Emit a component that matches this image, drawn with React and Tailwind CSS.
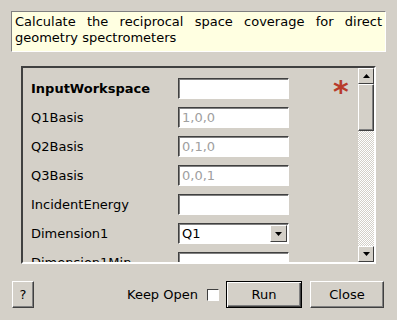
import React from "react";

const rows = [
  { label: "InputWorkspace", bold: true, value: "", star: true },
  { label: "Q1Basis", value: "1,0,0", placeholder: true },
  { label: "Q2Basis", value: "0,1,0", placeholder: true },
  { label: "Q3Basis", value: "0,0,1", placeholder: true },
  { label: "IncidentEnergy", value: "" },
  { label: "Dimension1", combo: true, value: "Q1" },
  { label: "Dimension1Min", value: "" },
];

const Arrow = ({ down }) => (
  <svg width="7" height="4" viewBox="0 0 7 4">
    <path d={down ? "M0 0h7L3.5 4z" : "M0 4h7L3.5 0z"} fill="#000" />
  </svg>
);

const Field = ({ row }) => {
  if (row.combo) {
    return (
      <div className="flex h-[21px] w-[111px] items-center border-t border-l border-t-[#404040] border-l-[#404040] border-b border-r border-b-white border-r-white bg-white shadow-[inset_1px_1px_0_#808080]">
        <span className="flex-1 pl-[3px] text-[13px] text-black">{row.value}</span>
        <div className="mr-[1px] flex h-[17px] w-[17px] items-center justify-center border border-t-white border-l-white border-b-[#404040] border-r-[#404040] bg-[#d4d0c8]">
          <Arrow down />
        </div>
      </div>
    );
  }
  return (
    <div className="flex h-[21px] w-[111px] items-center border-t border-l border-t-[#404040] border-l-[#404040] border-b border-r border-b-white border-r-white bg-white pl-[3px] text-[13px] shadow-[inset_1px_1px_0_#808080]">
      <span className={row.placeholder ? "text-[#a0a0a0]" : "text-black"}>
        {row.value}
      </span>
    </div>
  );
};

const Button = ({ children, def, className }) => (
  <div
    className={`flex h-[27px] items-center justify-center bg-[#d4d0c8] text-[13px] text-black ${className} ${
      def
        ? "border border-black shadow-[inset_1px_1px_0_#fff,inset_-1px_-1px_0_#404040,inset_-2px_-2px_0_#808080]"
        : "border border-t-white border-l-white border-b-[#404040] border-r-[#404040] shadow-[inset_-1px_-1px_0_#808080]"
    }`}
  >
    {children}
  </div>
);

export default function App() {
  return (
    <div
      className="h-[320px] w-[397px] overflow-hidden bg-[#d4d0c8] pt-[11px]"
      style={{ fontFamily: "'DejaVu Sans', sans-serif" }}
    >
      {/* Description */}
      <div className="ml-[11px] h-[41px] w-[375px] border-t border-l border-t-[#808080] border-l-[#808080] border-b border-r border-b-white border-r-white bg-[#ffffe1] px-[3px] pt-[2px] text-justify text-[13px] leading-[16px] text-black">
        Calculate the reciprocal space coverage for direct geometry spectrometers
      </div>

      {/* Properties scroll area */}
      <div className="ml-[21px] mt-[14px] flex h-[198px] w-[355px] border-2 border-t-[#404040] border-l-[#404040] border-b-white border-r-white bg-[#d4d0c8]">
        <div className="flex flex-1 flex-col gap-[8px] overflow-hidden pl-[8px] pt-[10px]">
          {rows.map((row) => (
            <div key={row.label} className="flex h-[21px] shrink-0 items-center">
              <span
                className={`w-[147px] text-[13px] text-black ${
                  row.bold ? "font-bold" : ""
                }`}
              >
                {row.label}
              </span>
              <Field row={row} />
              {row.star && (
                <span className="ml-[44px] mt-[6px] text-[30px] font-bold leading-none text-[#b83a2a]">
                  *
                </span>
              )}
            </div>
          ))}
        </div>
        {/* Scrollbar */}
        <div className="flex w-[16px] flex-col">
          <div className="flex h-[16px] items-center justify-center border border-t-white border-l-white border-b-[#404040] border-r-[#404040] bg-[#d4d0c8]">
            <Arrow />
          </div>
          <div className="h-[47px] border border-t-white border-l-white border-b-[#404040] border-r-[#404040] bg-[#d4d0c8] shadow-[inset_-1px_-1px_0_#808080]" />
          <div className="flex-1 bg-[repeating-conic-gradient(#ffffff_0_25%,#d4d0c8_0_50%)] bg-[length:2px_2px]" />
          <div className="flex h-[16px] items-center justify-center border border-t-white border-l-white border-b-[#404040] border-r-[#404040] bg-[#d4d0c8]">
            <Arrow down />
          </div>
        </div>
      </div>

      {/* Bottom buttons */}
      <div className="mt-[17px] flex items-center pl-[12px]">
        <Button className="w-[22px] h-[26px]">?</Button>
        <span className="ml-[93px] text-[13px] text-black">Keep Open</span>
        <div className="ml-[9px] h-[12px] w-[12px] border border-t-[#404040] border-l-[#404040] border-b-white border-r-white bg-white" />
        <Button def className="ml-[7px] w-[76px]">
          Run
        </Button>
        <Button className="ml-[8px] w-[74px]">Close</Button>
      </div>
    </div>
  );
}
